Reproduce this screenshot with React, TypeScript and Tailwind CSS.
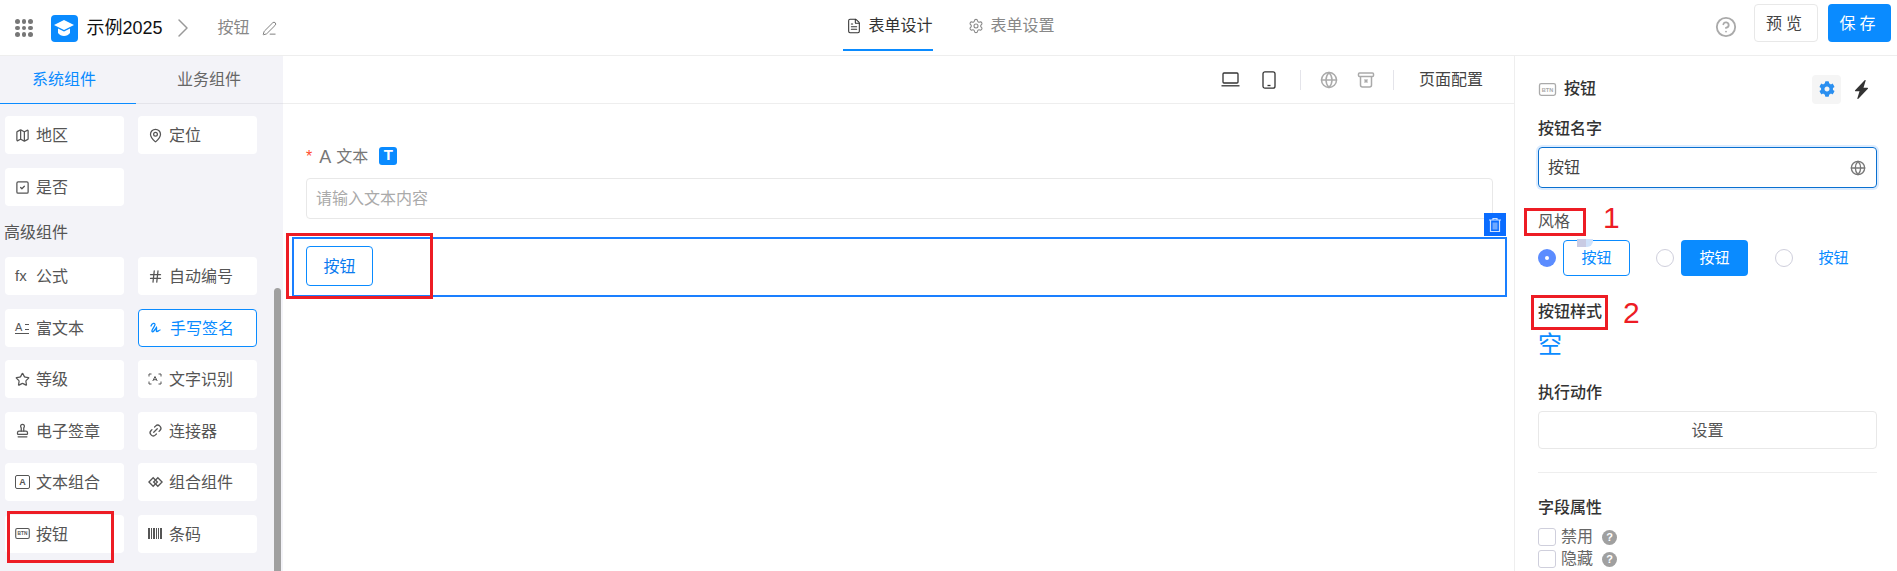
import type { ReactNode } from "react";
import {
  ChevronRight,
  CircleHelp,
  FileText,
  Globe,
  Hash,
  Link2,
  MapPin,
  Map as MapIcon,
  PenLine,
  Settings,
  SquareCheck,
  Star,
  Stamp,
} from "lucide-react";
import { FaCog } from "react-icons/fa";
import { BsLightningChargeFill } from "react-icons/bs";

const BtnIcon = ({ className }: { className?: string }) => (
  <svg viewBox="0 0 16 12" className={className} fill="none">
    <rect x="0.6" y="0.6" width="14.8" height="10.8" rx="1.6" stroke="currentColor" strokeWidth="1.2" />
    <text x="8" y="8" textAnchor="middle" fontSize="5.2" fontWeight="700" fontFamily="Liberation Sans" fill="currentColor">
      BTN
    </text>
  </svg>
);

const BarcodeIcon = () => (
  <svg viewBox="0 0 14 11" className="h-[11px] w-[14px]" fill="#555">
    <rect x="0" width="2" height="11" />
    <rect x="3" width="1" height="11" />
    <rect x="5" width="2" height="11" />
    <rect x="8" width="1" height="11" />
    <rect x="10" width="1" height="11" />
    <rect x="12" width="2" height="11" />
  </svg>
);

const RichIcon = () => (
  <span className="relative block h-[12px] w-[14px] border-b border-[#555] text-[11px] leading-[11px] text-[#555]">
    A<span className="absolute right-0 top-[2px] block h-[6px] w-[4px] border-y border-[#555]" />
  </span>
);

const TextBoxIcon = () => (
  <span className="flex h-[14px] w-[15px] items-center justify-center rounded-[2px] border border-[#555] text-[9px] font-bold text-[#555]">
    A
  </span>
);

const ComboIcon = () => (
  <svg viewBox="0 0 16 12" className="h-[12px] w-[15px]" fill="none" stroke="#555" strokeWidth="1.4">
    <path d="M5.5 1.5 1 6l4.5 4.5L10 6z" />
    <path d="M10.5 1.5 6 6l4.5 4.5L15 6z" />
  </svg>
);

const ScanIcon = () => (
  <svg viewBox="0 0 14 12" className="h-[12px] w-[14px]" fill="none" stroke="#555" strokeWidth="1">
    <path d="M1 3.500V1h2.500M10.500 1H13v2.500M13 8.500V11h-2.500M3.500 11H1V8.500" />
    <path d="m4.800 8 2.200-4.500L9.200 8M5.600 6.700h2.800" />
  </svg>
);

const SignIcon = () => (
  <svg viewBox="0 0 14 14" className="h-[14px] w-[14px]" fill="none" stroke="#0a8bff" strokeWidth="1.3" strokeLinecap="round">
    <path d="M2 5c1-3 4-3.500 4-1.500S2 9 3 10.500s3-2 4.500-4c.5 2-1 4 .5 4 1 0 1.500-1 3-1.500" />
  </svg>
);

const LaptopIcon = () => (
  <svg viewBox="0 0 19 15" className="h-[15px] w-[19px]" fill="none" stroke="#333" strokeWidth="1.300">
    <rect x="2" y="1" width="15" height="10" rx="1" />
    <path d="M0.500 13.800h18" />
  </svg>
);

const PhoneIcon = () => (
  <svg viewBox="0 0 14 18" className="h-[18px] w-[14px]" fill="none" stroke="#333" strokeWidth="1.300">
    <rect x="1" y="0.800" width="12" height="16.400" rx="2" />
    <path d="M5.500 14.500h3" />
  </svg>
);

const TrashX = () => (
  <svg viewBox="0 0 18 18" className="h-[18px] w-[18px]" fill="none" stroke="#aaa" strokeWidth="1.5">
    <rect x="1.500" y="2" width="15" height="3.500" rx="1" />
    <path d="M3.500 5.500V14a2 2 0 0 0 2 2h7a2 2 0 0 0 2-2V5.500" />
    <path d="m7.500 8.500 3 3m0-3-3 3" />
  </svg>
);

const Logo = () => (
  <div className="flex h-[27px] w-[27px] items-center justify-center rounded-[4px] bg-[#0a8bff]">
    <svg viewBox="0 0 20 16" className="h-[16px] w-[20px]" fill="#fff">
      <path d="M10 0 20 5l-10 5L0 5z" />
      <path d="M4 8.500 10 11.500l6-3V13c-1.500 2-3.500 3-6 3s-4.500-1-6-3z" />
    </svg>
  </div>
);

const Tile = ({ icon, label, active }: { icon: ReactNode; label: string; active?: boolean }) => (
  <div
    className={`flex h-[38px] items-center rounded-[4px] bg-white pl-[10px] text-base ${
      active ? "border border-[#0a8bff] text-[#0a8bff]" : "text-[#555]"
    }`}
  >
    <span className="flex w-[21px] shrink-0 items-center">{icon}</span>
    <span className="pt-[2px]">{label}</span>
  </div>
);

const ic = "h-[15px] w-[15px] text-[#555]";

const Sidebar = () => (
  <aside className="relative h-full w-[283px] shrink-0 overflow-hidden bg-[#f3f3f8]">
    <div className="flex h-[48px] border-b border-[#e4e4ea] text-base">
      <div className="-mb-px flex w-[136px] items-center justify-center border-b border-[#0a8bff] pr-[8px] text-[#0a8bff]">系统组件</div>
      <div className="flex w-[146px] items-center justify-center text-[#666]">业务组件</div>
    </div>
    <div className="grid w-[252px] grid-cols-[119px_119px] gap-x-[14px] gap-y-[14px] pl-[5px] pt-[12px]">
      <Tile icon={<MapIcon className={ic} />} label="地区" />
      <Tile icon={<MapPin className={ic} />} label="定位" />
      <Tile icon={<SquareCheck className={ic} />} label="是否" />
    </div>
    <p className="mt-[16px] pl-[4px] text-base leading-[22px] h-[20px] text-[#555]">高级组件</p>
    <div className="mt-[15px] grid w-[252px] grid-cols-[119px_119px] gap-x-[14px] gap-y-[13.6px] pl-[5px]">
      <Tile icon={<span className="text-[15px] text-[#555]">fx</span>} label="公式" />
      <Tile icon={<Hash className={ic} />} label="自动编号" />
      <Tile icon={<RichIcon />} label="富文本" />
      <Tile icon={<SignIcon />} label="手写签名" active />
      <Tile icon={<Star className={ic} />} label="等级" />
      <Tile icon={<ScanIcon />} label="文字识别" />
      <Tile icon={<Stamp className={ic} />} label="电子签章" />
      <Tile icon={<Link2 className={`${ic} -rotate-45`} />} label="连接器" />
      <Tile icon={<TextBoxIcon />} label="文本组合" />
      <Tile icon={<ComboIcon />} label="组合组件" />
      <Tile icon={<BtnIcon className="h-[11px] w-[15px] text-[#555]" />} label="按钮" />
      <Tile icon={<BarcodeIcon />} label="条码" />
    </div>
    {/* scrollbar */}
    <div className="absolute bottom-0 right-[2px] top-[232px] w-[7px] rounded-t-full bg-[#a0a0a0]" />
  </aside>
);

const Toolbar = () => (
  <div className="flex h-[48px] items-center justify-end border-b border-[#eee] pr-[31px]">
    <LaptopIcon />
    <span className="ml-[22px]">
      <PhoneIcon />
    </span>
    <span className="ml-[24px] h-[20px] w-px bg-[#e4e4ea]" />
    <Globe className="ml-[19px] h-[18px] w-[18px] text-[#aaa]" strokeWidth={2} />
    <span className="ml-[19px]">
      <TrashX />
    </span>
    <span className="ml-[18px] h-[20px] w-px bg-[#e4e4ea]" />
    <span className="ml-[25px] text-base text-[#444]">页面配置</span>
  </div>
);

const Canvas = () => (
  <main className="min-w-0 flex-1">
    <Toolbar />
    <div className="ml-[23px] mr-[21px] mt-[43px] flex h-[20px] items-center text-base text-[#777]">
      <span className="mr-[7px] text-[#ff4d2e]">*</span>
      <span className="mr-[5px] text-[18px]">A</span>
      <span>文本</span>
      <span className="mb-[3px] ml-[11px] flex h-[18px] w-[18px] items-center justify-center rounded-[3px] bg-[#0a8bff] text-[15px] font-bold text-white">T</span>
    </div>
    <div className="ml-[23px] mr-[21px] mt-[11px] flex h-[41px] items-center rounded-[4px] border border-[#e8e8e8] pl-[9px] text-base text-[#aaa]">
      请输入文本内容
    </div>
    <div className="relative ml-[9px] mr-[7px] mt-[18px] h-[60px] border-2 border-[#1a7fff] pl-[12px] pt-[7px]">
      <button className="flex h-[40px] w-[67px] items-center justify-center rounded-[4px] border border-[#0a8bff] pt-[1px] text-base text-[#0a7bef]">按钮</button>
      <div className="absolute -right-[1px] -top-[26px] flex h-[23px] w-[22px] items-center justify-center bg-[#0a6cff]">
        <svg viewBox="0 0 14 16" className="h-[16px] w-[14px]" fill="none" stroke="#cfe2ff" strokeWidth="1.2">
          <path d="M1 3h12M5 3V1.500h4V3M2.500 3v11.500h9V3" />
          <path d="M4.500 5.500h5v7h-5z" fill="#6ea8ff" stroke="none" />
        </svg>
      </div>
    </div>
  </main>
);

const Radio = ({ checked }: { checked?: boolean }) =>
  checked ? (
    <span className="flex h-[18px] w-[18px] items-center justify-center rounded-full bg-[#5b8cff]">
      <span className="h-[4px] w-[4px] rounded-full bg-white" />
    </span>
  ) : (
    <span className="block h-[18px] w-[18px] rounded-full border border-[#cfcfdc] bg-white" />
  );

const Check = ({ label }: { label: string }) => (
  <div className="flex h-[18px] items-center text-base text-[#666]">
    <span className="h-[18px] w-[18px] rounded-[3px] border border-[#cfcfdc]" />
    <span className="ml-[5px]">{label}</span>
    <span className="ml-[9px] flex h-[15px] w-[15px] items-center justify-center rounded-full bg-[#a0a0a0] text-[11px] font-bold leading-none text-white">?</span>
  </div>
);

const PanelLabel = ({ children, className }: { children: ReactNode; className?: string }) => (
  <p className={`h-[20px] text-base font-medium leading-[22px] text-[#333] ${className ?? ""}`}>{children}</p>
);

const Panel = () => (
  <aside className="h-full w-[383px] shrink-0 border-l border-[#eee] pl-[23px] pr-[20px] pt-[19px]">
    <div className="flex h-[28px] items-center">
      <BtnIcon className="h-[13px] w-[19px] text-[#aaa]" />
      <span className="ml-[7px] text-base font-medium text-[#333]">按钮</span>
      <span className="ml-auto flex h-[29px] w-[29px] items-center justify-center rounded-[4px] bg-[#f5f5f5]">
        <FaCog className="h-[16px] w-[16px] text-[#2a8ff0]" />
      </span>
      <BsLightningChargeFill className="ml-[11px] mr-[6px] h-[19px] w-[19px] text-[#333]" />
    </div>
    <PanelLabel className="mt-[15px]">按钮名字</PanelLabel>
    <div className="mt-[9px] flex h-[41px] items-center justify-between rounded-[4px] border border-[#0a70d0] pl-[9px] pr-[10px] text-base text-[#444] shadow-[0_0_0_2px_#dcecff]">
      <span className="pt-[1px]">按钮</span>
      <Globe className="h-[16px] w-[16px] text-[#777]" />
    </div>
    <p className="mt-[23px] h-[20px] text-base leading-[22px] text-[#555]">风格</p>
    <div className="mt-[9px] flex h-[36px] items-center text-[15px]">
      <span className="w-[25px]">
        <Radio checked />
      </span>
      <div className="relative flex h-[36px] w-[67px] items-center justify-center rounded-[4px] border border-[#0a8bff] text-[#0a8bff]">
        按钮
        <span className="absolute -top-[2px] left-[13px] h-[8px] w-[9px] bg-[#c9cbe3]" />
        <span className="absolute -top-[2px] left-[22px] h-[8px] w-[7px] rounded-br-[6px] bg-[#cfe2fb]" />
      </div>
      <span className="ml-[26px] w-[25px]">
        <Radio />
      </span>
      <div className="flex h-[36px] w-[67px] items-center justify-center rounded-[4px] bg-[#0a8bff] text-white">按钮</div>
      <span className="ml-[27px] w-[25px]">
        <Radio />
      </span>
      <div className="flex h-[36px] w-[67px] items-center justify-center text-[#0a8bff]">按钮</div>
    </div>
    <PanelLabel className="mt-[25px]">按钮样式</PanelLabel>
    <p className="mt-[9px] h-[30px] text-[24px] leading-[30px] text-[#0a8bff]">空</p>
    <PanelLabel className="mt-[22px]">执行动作</PanelLabel>
    <button className="mt-[9px] flex h-[38px] w-full items-center justify-center rounded-[4px] border border-[#e8e8e8] pt-[2px] text-base text-[#555]">设置</button>
    <div className="mt-[23px] h-px bg-[#eee]" />
    <PanelLabel className="mt-[24px]">字段属性</PanelLabel>
    <div className="mt-[11px] flex flex-col gap-[4px]">
      <Check label="禁用" />
      <Check label="隐藏" />
    </div>
  </aside>
);

const Header = () => (
  <header className="flex h-[56px] items-center border-b border-[#eee] bg-white">
    <div className="flex flex-1 items-center self-start pl-[15px] pt-[12px]">
      <div className="grid grid-cols-3 gap-[2px]">
        {Array.from({ length: 9 }).map((_, i) => (
          <span key={i} className="h-[4.500px] w-[4.500px] rounded-full bg-[#777]" />
        ))}
      </div>
      <span className="ml-[18px]">
        <Logo />
      </span>
      <span className="ml-[9px] text-[18px] text-[#111]">示例2025</span>
      <ChevronRight className="ml-[4px] h-[32px] w-[32px] text-[#999]" strokeWidth={1.1} />
      <span className="ml-[19px] text-base text-[#888]">按钮</span>
      <PenLine className="ml-[12px] h-[15px] w-[15px] text-[#777]" strokeWidth={1.5} />
    </div>
    <nav className="mr-[8px] flex h-full items-center pb-[4px] text-base">
      <div className="relative flex h-full items-center pl-[3px] text-[#333]">
        <FileText className="mr-[6px] h-[16px] w-[16px]" strokeWidth={1.6} />
        表单设计
        <span className="absolute bottom-0 left-0 right-0 h-[2px] bg-[#0a8bff]" />
      </div>
      <div className="ml-[35px] flex items-center text-[#888]">
        <Settings className="mr-[7px] h-[16px] w-[16px]" strokeWidth={1.6} />
        表单设置
      </div>
    </nav>
    <div className="flex flex-1 items-start justify-end self-start pr-[6px] pt-[4px]">
      <CircleHelp className="mt-[12px] h-[22px] w-[22px] text-[#aaa]" strokeWidth={2} />
      <button className="ml-[17px] h-[38px] w-[64px] rounded-[4px] border border-[#e8e8e8] pt-[1px] text-base tracking-[4px] text-[#444]">预览</button>
      <button className="ml-[10px] h-[38px] w-[63px] rounded-[4px] bg-[#0a8bff] pt-[1px] text-base tracking-[4px] text-white">保存</button>
    </div>
  </header>
);

export default function App() {
  return (
    <div className="relative flex h-[571px] w-[1897px] flex-col overflow-hidden bg-white font-['Liberation_Sans','Noto_Sans_CJK_SC',sans-serif]">
      <Header />
      <div className="flex min-h-0 flex-1">
        <Sidebar />
        <Canvas />
        <Panel />
      </div>

      {/* red annotations drawn on top of the screenshot */}
      <div className="absolute left-[7px] top-[511px] h-[52px] w-[107px] border-[3px] border-[#ed1c24]" />
      <div className="absolute left-[286px] top-[233px] h-[66px] w-[147px] border-[3px] border-[#ed1c24]" />
      <div className="absolute left-[1524px] top-[208px] h-[28px] w-[62px] border-[3px] border-[#ed1c24]" />
      <div className="absolute left-[1531px] top-[295px] h-[35px] w-[77px] border-[3px] border-[#ed1c24]" />
      <span className="absolute left-[1603px] top-[201px] text-[30px] leading-[34px] text-[#ed1c24]">1</span>
      <span className="absolute left-[1623px] top-[296px] text-[30px] leading-[34px] text-[#ed1c24]">2</span>
    </div>
  );
}
